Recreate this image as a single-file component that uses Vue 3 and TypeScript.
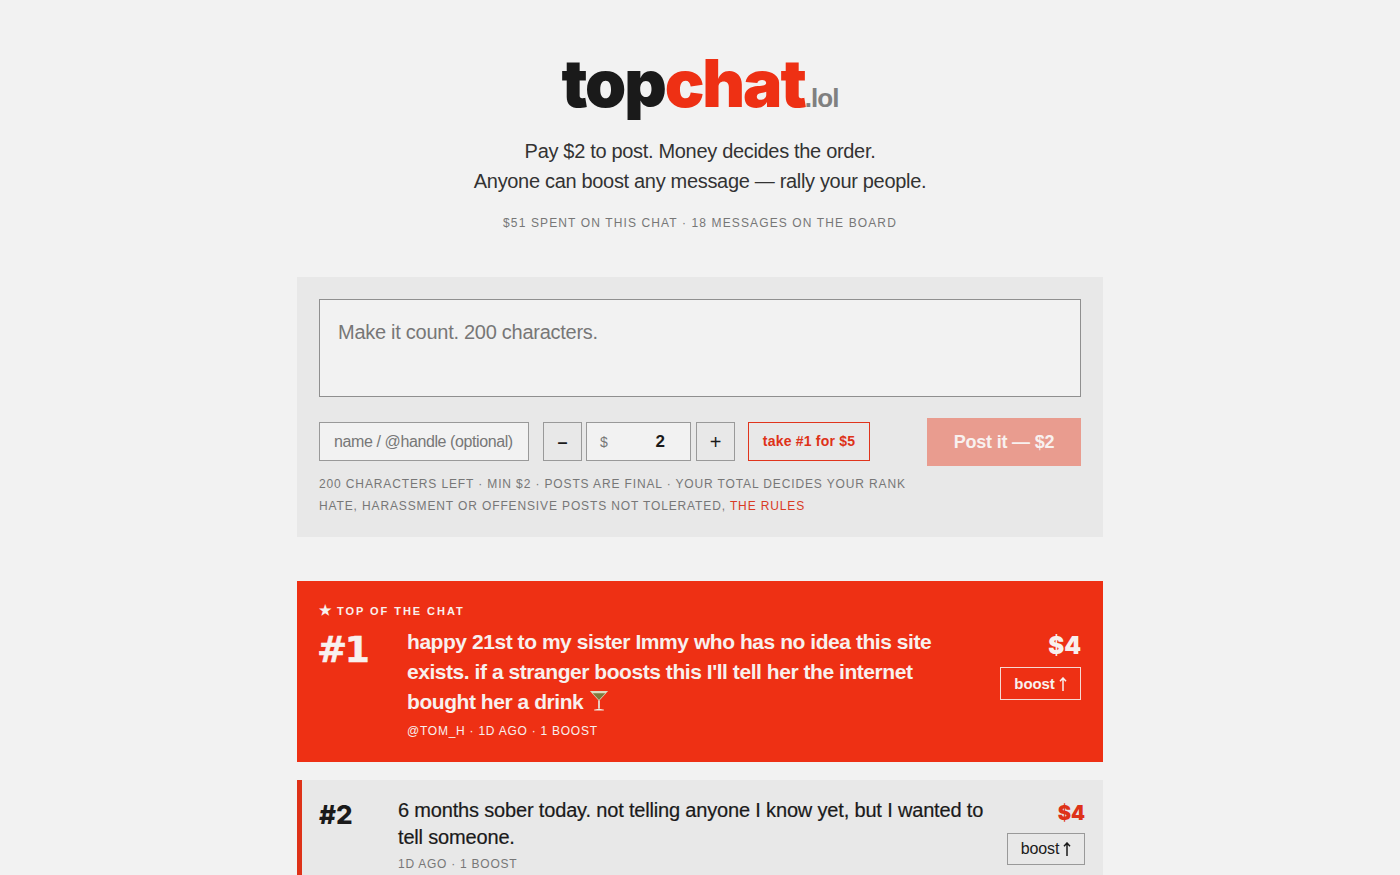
<script setup lang="ts">
interface Post {
  rank: number
  text: string
  meta: string
  amount: number
}
const second: Post = {
  rank: 2,
  text: '6 months sober today. not telling anyone I know yet, but I wanted to tell someone.',
  meta: '1d ago · 1 boost',
  amount: 4,
}
</script>

<template>
  <main class="page">
    <header class="head">
      <h1 class="logo"><span class="top">top</span><span class="chat">chat</span><span class="tld">.lol</span></h1>
      <p class="tag">Pay $2 to post. Money decides the order.<br />Anyone can boost any message — rally your people.</p>
      <p class="stats">$51 spent on this chat · 18 messages on the board</p>
    </header>

    <section class="composer">
      <div class="ta">Make it count. 200 characters.</div>
      <div class="controls">
        <div class="name">name / @handle (optional)</div>
        <div class="stepper">
          <button class="step">–</button>
          <div class="amt"><span class="cur">$</span><span class="val">2</span></div>
          <button class="step plus">+</button>
        </div>
        <button class="take">take #1 for $5</button>
        <button class="post">Post it — $2</button>
      </div>
      <p class="note">200 characters left · min $2 · posts are final · your total decides your rank</p>
      <p class="note">hate, harassment or offensive posts not tolerated, <a class="rules">the rules</a></p>
    </section>

    <section class="hero">
      <div class="hero-label"><span class="star">★</span> Top of the chat</div>
      <div class="hero-row">
        <div class="hero-rank">#1</div>
        <div class="hero-body">
          <p class="hero-text">happy 21st to my sister Immy who has no idea this site exists. if a stranger boosts this I'll tell her the internet bought her a drink
            <svg class="martini" viewBox="0 0 20 24" role="img" aria-label="cocktail">
              <path d="M0.5 2h19L10 12.5z" fill="#dcdcc0" />
              <path d="M3.5 4.5h13L10 11.5z" fill="#7d7a3c" />
              <path d="M9.1 12h1.8v8.5H9.1z" fill="#e8e4da" />
              <path d="M5 21.5c1.5-1 8.5-1 10 0v1H5z" fill="#f0ece2" />
            </svg>
          </p>
          <p class="hero-meta">@tom_h · 1d ago · 1 boost</p>
        </div>
        <div class="hero-side">
          <div class="hero-amt">$4</div>
          <button class="boost hero-boost">boost
            <svg class="arr" viewBox="0 0 8 14"><path d="M4 14V1.2M1 4.2 4 1l3 3.2" fill="none" stroke="currentColor" stroke-width="1.5" /></svg>
          </button>
        </div>
      </div>
    </section>

    <section class="row">
      <div class="rank">#{{ second.rank }}</div>
      <div class="body">
        <p class="text">{{ second.text }}</p>
        <p class="meta">{{ second.meta }}</p>
      </div>
      <div class="side">
        <div class="amount">${{ second.amount }}</div>
        <button class="boost">boost
          <svg class="arr" viewBox="0 0 8 14"><path d="M4 14V1.2M1 4.2 4 1l3 3.2" fill="none" stroke="currentColor" stroke-width="1.5" /></svg>
        </button>
      </div>
    </section>
  </main>
</template>

<style>
html, body { height: 875px; overflow: hidden; background: #f2f2f2; }
</style>

<style scoped>
* { box-sizing: border-box; }
p, h1 { margin: 0; }
button { font-family: inherit; cursor: pointer; padding: 0; }
.page {
  width: 806px;
  margin: 0 auto;
  font-family: "Liberation Sans", Arial, sans-serif;
  color: #1a1a1a;
}
.head { text-align: center; padding-top: 45px; }
.logo {
  font-family: Inter, "Liberation Sans", sans-serif;
  font-weight: 900;
  font-size: 66px;
  line-height: 76px;
  letter-spacing: -2.1px;
}
.chat { color: #ee3014; }
.tld { color: #808080; font-size: 26px; letter-spacing: -0.9px; font-weight: 700; font-family: "Liberation Sans", sans-serif; }
.tag { font-size: 20px; line-height: 30px; letter-spacing: -0.32px; color: #333; }
.stats {
  margin-top: 17px;
  font-size: 12px;
  line-height: 20px;
  letter-spacing: 1.12px;
  text-transform: uppercase;
  color: #777;
}
.composer { margin-top: 44px; background: #e8e8e8; padding: 22px; height: 260px; }
.ta {
  height: 98px;
  background: #f2f2f2;
  border: 1px solid #8f8f8f;
  padding: 18px;
  font-size: 20px;
  line-height: 28px;
  letter-spacing: -0.27px;
  color: #777;
}
.controls { display: flex; align-items: flex-start; margin-top: 21px; height: 48px; }
.name {
  width: 210px;
  height: 39px;
  margin-top: 4px;
  border: 1px solid #999;
  background: #f2f2f2;
  padding: 0 14px;
  font-size: 16px;
  line-height: 37px;
  letter-spacing: -0.4px;
  color: #777;
  white-space: nowrap;
}
.stepper { display: flex; margin: 4px 0 0 14px; gap: 4px; height: 39px; }
.step {
  width: 39px;
  border: 1px solid #999;
  background: #e8e8e8;
  color: #1a1a1a;
  font-size: 18px;
  font-weight: 700;
  padding-top: 2px;
}
.plus { margin-left: 1px; font-weight: 400; font-size: 20px; }
.amt {
  width: 105px;
  border: 1px solid #999;
  background: #f2f2f2;
  display: flex;
  justify-content: space-between;
  align-items: center;
  padding: 0 25px 0 13px;
}
.cur { color: #777; font-size: 14px; }
.val { font-weight: 700; font-size: 17px; }
.take {
  margin: 4px 0 0 13px;
  width: 122px;
  height: 39px;
  background: transparent;
  border: 1px solid #e0341c;
  color: #de3218;
  font-size: 14px;
  font-weight: 700;
  letter-spacing: 0.2px;
  padding-bottom: 2px;
}
.post {
  margin-left: auto;
  width: 154px;
  height: 48px;
  border: none;
  background: #e99c8f;
  color: #f8f1ef;
  font-size: 18px;
  font-weight: 700;
  letter-spacing: -0.2px;
}
.note {
  font-size: 12px;
  line-height: 22px;
  letter-spacing: 0.87px;
  text-transform: uppercase;
  color: #777;
}
.controls + .note { margin-top: 7px; }
.rules { color: #d93a25; }
.hero {
  margin-top: 44px;
  height: 181px;
  background: #ee3014;
  color: #f8f0ee;
  padding: 21px 22px;
}
.hero-label {
  font-size: 11px;
  line-height: 16px;
  font-weight: 700;
  letter-spacing: 1.95px;
  text-transform: uppercase;
}
.star { letter-spacing: 0; font-size: 14px; }
.hero-row { display: flex; margin-top: 3px; }
.hero-rank {
  width: 88px;
  flex: none;
  font-family: "DejaVu Sans", sans-serif;
  font-weight: 700;
  font-size: 36px;
  letter-spacing: -2.5px;
  line-height: 56px;
  margin-left: -2px;
  margin-right: 2px;
  -webkit-text-stroke: 0.5px #f8f0ee;
}
.hero-body { flex: 1; padding-top: 5px; }
.hero-text { font-size: 21px; line-height: 30px; font-weight: 700; letter-spacing: -0.45px; width: 560px; }
.martini { width: 20px; height: 23px; vertical-align: -3px; }
.hero-meta {
  font-size: 12px;
  line-height: 20px;
  letter-spacing: 0.75px;
  text-transform: uppercase;
  margin-top: 4px;
}
.hero-side { width: 90px; display: flex; flex-direction: column; align-items: flex-end; }
.hero-amt { font-family: Inter, sans-serif; font-weight: 900; font-size: 24px; line-height: 32px; margin-top: 8px; }
.boost {
  width: 78px;
  height: 32px;
  margin-top: 4px;
  background: transparent;
  border: 1px solid #999;
  color: #1a1a1a;
  font-size: 16px;
  letter-spacing: -0.1px;
  display: flex;
  align-items: center;
  justify-content: center;
  gap: 4px;
}
.arr { width: 8px; height: 14px; }
.hero-boost { width: 81px; height: 33px; border-color: #f6d9d2; color: #f8f0ee; font-weight: 700; margin-top: 5px; font-size: 15px; }
.row {
  margin-top: 18px;
  display: flex;
  background: #e8e8e8;
  border-left: 5px solid #de3218;
  padding: 17px 18px 0 17px;
  min-height: 110px;
}
.rank {
  width: 79px;
  flex: none;
  font-family: Inter, sans-serif;
  font-weight: 800;
  font-size: 26px;
  line-height: 36px;
}
.body { flex: 1; }
.text { font-size: 20px; line-height: 26.5px; letter-spacing: -0.17px; width: 600px; -webkit-text-stroke: 0.2px #1a1a1a; }
.meta {
  margin-top: 4px;
  font-size: 12px;
  line-height: 20px;
  letter-spacing: 0.75px;
  text-transform: uppercase;
  color: #777;
}
.side { width: 90px; display: flex; flex-direction: column; align-items: flex-end; }
.amount { font-family: Inter, sans-serif; font-weight: 900; font-size: 20px; line-height: 32px; color: #de3218; }
</style>
